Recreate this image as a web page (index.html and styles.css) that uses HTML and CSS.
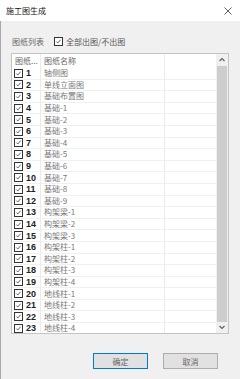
FILE: index.html
```html
<!DOCTYPE html>
<html lang="zh">
<head>
    <meta charset="UTF-8">
    <meta name="viewport" content="width=device-width, initial-scale=1.0">
    <title>施工图生成</title>
    <link rel="stylesheet" href="styles.css">
</head>
<body>
    <div class="window">
        <!-- Title bar -->
        <div class="titlebar">
            <span class="title">施工图生成</span>
            <svg class="close" width="8" height="8" viewBox="0 0 8 8">
                <path d="M0.5 0.5 L7.5 7.5 M7.5 0.5 L0.5 7.5" stroke="#333" stroke-width="0.8" fill="none"/>
            </svg>
        </div>

        <div class="content">
            <!-- Options -->
            <div class="options">
                <span class="label">图纸列表</span>
                <label class="check-all">
                    <span class="box">
                        <svg width="9" height="9" viewBox="0 0 9 9"><path d="M1.8 4.6 L3.6 6.4 L7.2 2.2" stroke="#222" stroke-width="0.9" fill="none"/></svg>
                    </span>
                    全部出图/不出图
                </label>
            </div>

            <!-- Drawing list -->
            <div class="list-box">
                <div class="list">
                    <div class="row header">
                        <div class="cell num">图纸...</div>
                        <div class="cell name">图纸名称</div>
                        <div class="cell extra"></div>
                    </div>
                    <div id="rows"></div>
                </div>
                <div class="scrollbar">
                    <svg class="arrow" width="12" height="12" viewBox="0 0 12 12"><path d="M3.5 7 L6 4.5 L8.5 7" stroke="#606060" stroke-width="1.2" fill="none"/></svg>
                    <div class="thumb"></div>
                    <svg class="arrow" width="12" height="11" viewBox="0 0 12 11"><path d="M3.5 4 L6 6.5 L8.5 4" stroke="#606060" stroke-width="1.2" fill="none"/></svg>
                </div>
            </div>

            <!-- Buttons -->
            <div class="buttons">
                <button class="btn primary">确定</button>
                <button class="btn">取消</button>
            </div>
        </div>
    </div>

    <script>
        var names = [
            "轴侧图", "单线立面图", "基础布置图",
            "基础-1", "基础-2", "基础-3", "基础-4", "基础-5", "基础-6", "基础-7", "基础-8", "基础-9",
            "构架梁-1", "构架梁-2", "构架梁-3",
            "构架柱-1", "构架柱-2", "构架柱-3", "构架柱-4",
            "地线柱-1", "地线柱-2", "地线柱-3", "地线柱-4"
        ];

        var check = '<span class="box"><svg width="9" height="9" viewBox="0 0 9 9"><path d="M1.8 4.6 L3.6 6.4 L7.2 2.2" stroke="#222" stroke-width="0.9" fill="none"/></svg></span>';

        var html = "";
        names.forEach(function (name, i) {
            html += '<div class="row">' +
                '<div class="cell num">' + check + '<b>' + (i + 1) + '</b></div>' +
                '<div class="cell name">' + name + '</div>' +
                '<div class="cell extra"></div>' +
                '</div>';
        });
        document.getElementById("rows").innerHTML = html;
    </script>
</body>
</html>
```

FILE: styles.css
```css
* {
    margin: 0;
    padding: 0;
    box-sizing: border-box;
}

body {
    width: 240px;
    height: 379px;
    overflow: hidden;
    background-color: #f0f0f0;
    font-family: "Noto Sans CJK SC", "Liberation Sans", sans-serif;
}

.window {
    height: 379px;
    display: flex;
    flex-direction: column;
}

.titlebar {
    height: 21px;
    background-color: #fff;
    display: flex;
    align-items: center;
    justify-content: space-between;
    padding: 0 8px 0 6px;
}

.title {
    font-size: 8px;
    color: #111;
}

.content {
    flex: 1;
    border-left: 1px solid #a8a8a8;
    padding: 14px 11px 0 10px;
    display: flex;
    flex-direction: column;
}

.options {
    height: 12px;
    display: flex;
    align-items: center;
    font-size: 8px;
    color: #666;
}

.label {
    margin-left: 1px;
    margin-right: 10px;
}

.check-all {
    display: flex;
    align-items: center;
    gap: 3px;
    color: #555;
}

.box {
    width: 9px;
    height: 9px;
    border: 1px solid #333;
    background-color: #fff;
    display: inline-flex;
    align-items: center;
    justify-content: center;
    flex-shrink: 0;
}

.box svg {
    display: block;
}

.list-box {
    margin-top: 6px;
    height: 281px;
    border: 1px solid #c4c4c4;
    background-color: #fff;
    display: flex;
    overflow: hidden;
}

.list {
    flex: 1;
    overflow: hidden;
}

.row {
    display: grid;
    grid-template-columns: 29px 124px 1fr;
    height: 11.6px;
}

.row.header {
    height: 14px;
}

.cell {
    border-right: 1px solid #e6ecf2;
    border-bottom: 1px solid #f0f0f0;
    font-size: 8px;
    line-height: 10px;
    color: #777;
    white-space: nowrap;
    overflow: hidden;
    display: flex;
    align-items: center;
}

.header .cell {
    border-bottom: none;
    color: #666;
}

.cell.num {
    padding-left: 2px;
    gap: 3px;
}

.header .cell.num {
    padding-left: 3px;
}

.cell.num b {
    font-family: "Liberation Sans", sans-serif;
    font-size: 9px;
    font-weight: bold;
    color: #222;
}

.cell.name {
    padding-left: 3px;
}

.cell.extra {
    border-right: none;
}

.scrollbar {
    width: 12px;
    background-color: #f0f0f0;
    display: flex;
    flex-direction: column;
    align-items: center;
}

.arrow {
    display: block;
    flex-shrink: 0;
}

.thumb {
    flex: 1;
    width: 10px;
    background-color: #cdcdcd;
}

.buttons {
    margin-top: 19px;
    display: flex;
    justify-content: flex-end;
    gap: 15px;
    padding-right: 11px;
}

.btn {
    width: 55px;
    height: 16px;
    background-color: #e1e1e1;
    border: 1px solid #adadad;
    font-family: "Noto Sans CJK SC", sans-serif;
    font-size: 8px;
    color: #666;
}

.btn.primary {
    border-color: #0078d7;
}
```
